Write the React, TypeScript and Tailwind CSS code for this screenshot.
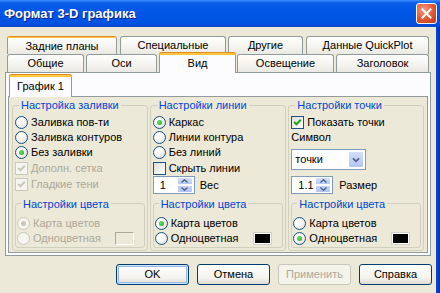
import React from "react";

const blue = "text-[#0046D5]";

function Radio({ checked, disabled }: { checked?: boolean; disabled?: boolean }) {
  return (
    <span
      className={`flex h-[13px] w-[13px] shrink-0 items-center justify-center rounded-full border ${
        disabled
          ? "border-[#CAC8BB] bg-[#F6F5EF]"
          : "border-[#1C5180] bg-[radial-gradient(circle_at_35%_35%,#ffffff_25%,#D5D4CC_100%)]"
      }`}
    >
      {checked && (
        <span
          className={`h-[5px] w-[5px] rounded-full ${
            disabled ? "bg-[#CAC8BB]" : "bg-[radial-gradient(circle_at_40%_40%,#6CE26C,#1E9A1E)]"
          }`}
        />
      )}
    </span>
  );
}

function Check({ checked, disabled }: { checked?: boolean; disabled?: boolean }) {
  return (
    <span
      className={`flex h-[13px] w-[13px] shrink-0 items-center justify-center border ${
        disabled
          ? "border-[#CAC8BB] bg-[#F6F5EF]"
          : "border-[#1C5180] bg-[linear-gradient(135deg,#DCDCD7,#ffffff)]"
      }`}
    >
      {checked && (
        <svg width="9" height="9" viewBox="0 0 9 9">
          <path
            d="M1.2 4 L3.5 6.3 L7.8 1.8"
            stroke={disabled ? "#CAC8BB" : "#21A121"}
            strokeWidth="2"
            fill="none"
          />
        </svg>
      )}
    </span>
  );
}

function Option({
  kind,
  label,
  checked,
  disabled,
  tall,
}: {
  kind: "radio" | "check";
  label: string;
  checked?: boolean;
  disabled?: boolean;
  tall?: boolean;
}) {
  return (
    <div className={`flex items-center gap-[3px] ${tall ? "h-[16px]" : "h-[15px]"}`}>
      {kind === "radio" ? <Radio checked={checked} disabled={disabled} /> : <Check checked={checked} disabled={disabled} />}
      <span className={disabled ? "text-[#ACA899]" : "text-black"}>{label}</span>
    </div>
  );
}

function GroupTitle({ children, small }: { children: React.ReactNode; small?: boolean }) {
  return (
    <div
      className={`${small ? "-mt-[7px]" : "-mt-[8px]"} ml-[4px] self-start bg-[#ECE9D8] px-[2px] leading-[14px] ${blue}`}
    >
      {children}
    </div>
  );
}

function Spin({ value }: { value: string }) {
  return (
    <div className="flex h-[18px] w-[42px] items-center border border-[#7F9DB9] bg-white pl-[6px]">
      <span className="flex-1">{value}</span>
      <div className="mr-[1px] flex h-[16px] w-[16px] flex-col">
        <div className="flex h-[8px] items-center justify-center rounded-t-[2px] border border-white bg-[linear-gradient(#D3DEFB,#B6C9F6)]">
          <svg width="7" height="4" viewBox="0 0 7 4">
            <path d="M0.5 3.5 L3.5 0.8 L6.5 3.5" stroke="#4D6185" strokeWidth="1.4" fill="none" />
          </svg>
        </div>
        <div className="flex h-[8px] items-center justify-center rounded-b-[2px] border border-white bg-[linear-gradient(#C6D5FA,#AFC4F5)]">
          <svg width="7" height="4" viewBox="0 0 7 4">
            <path d="M0.5 0.5 L3.5 3.2 L6.5 0.5" stroke="#4D6185" strokeWidth="1.4" fill="none" />
          </svg>
        </div>
      </div>
    </div>
  );
}

function Swatch({ disabled }: { disabled?: boolean }) {
  return disabled ? (
    <span className="ml-auto mr-[9px] h-[13px] w-[19px] border border-b-white border-l-[#ACA899] border-r-white border-t-[#ACA899] bg-[#ECE9D8]" />
  ) : (
    <span className="ml-auto mr-[9px] flex h-[13px] w-[19px] border border-[#D4D0C8] bg-white p-[1px]">
      <span className="flex-1 bg-black" />
    </span>
  );
}

function ColorBox({ mode, disabled }: { mode: "map" | "mono"; disabled?: boolean }) {
  return (
    <div className="mb-[2px] mt-auto flex h-[45px] flex-col rounded-[3px] border border-[#D0D0BF] px-[1px]">
      <GroupTitle small>Настройки цвета</GroupTitle>
      <div className="mt-[5px] flex h-[15px] items-center gap-[3px]">
        <Radio checked={mode === "map"} disabled={disabled} />
        <span className={disabled ? "text-[#ACA899]" : "text-black"}>Карта цветов</span>
      </div>
      <div className="flex h-[15px] items-center gap-[3px]">
        <Radio checked={mode === "mono"} disabled={disabled} />
        <span className={disabled ? "text-[#ACA899]" : "text-black"}>Одноцветная</span>
        <Swatch disabled={disabled} />
      </div>
    </div>
  );
}

function Tab({
  label,
  w,
  ml,
  hot,
  selected,
}: {
  label: string;
  w: string;
  ml: string;
  hot?: boolean;
  selected?: boolean;
}) {
  if (selected) {
    return (
      <div
        className={`relative z-10 -mt-[2px] flex h-[21px] flex-col rounded-t-[3px] border-x border-[#919B9C] bg-[#FCFCFE] ${w} ${ml}`}
      >
        <div className="-mx-[1px] h-[3px] rounded-t-[3px] border-t border-[#E68B2C] bg-[#FFC73C]" />
        <div className="flex flex-1 items-center justify-center pb-[2px]">{label}</div>
      </div>
    );
  }
  return (
    <div
      className={`flex h-[18px] flex-col rounded-t-[3px] border border-b-0 border-[#919B9C] bg-[linear-gradient(#FFFFFF,#F4F3EE_60%,#E9E8E1)] ${w} ${ml} ${
        hot ? "border-t-[#E68B2C]" : ""
      }`}
    >
      {hot && <div className="h-[1px] bg-[#FFC73C]" />}
      <div className="flex flex-1 items-center justify-center">{label}</div>
    </div>
  );
}

function Button({ label, def, disabled }: { label: string; def?: boolean; disabled?: boolean }) {
  return (
    <div
      className={`flex h-[21px] w-[73px] items-center justify-center rounded-[3px] border ${
        disabled
          ? "border-[#C9C7BA] bg-[#F5F4EA] text-[#ACA899]"
          : "border-[#003C74] bg-[linear-gradient(#FFFFFF,#F3F2EC_70%,#DEDBD0)] text-black"
      } ${def ? "shadow-[inset_0_0_0_1px_#CEE7FF,inset_0_0_0_2px_#98B8EA]" : ""}`}
    >
      {label}
    </div>
  );
}

export default function App() {
  return (
    <div className="flex h-[293px] w-[440px] flex-col overflow-hidden font-['Liberation_Sans',Arial,sans-serif] text-[11px] text-black">
      {/* title bar */}
      <div className="flex h-[27px] shrink-0 items-center justify-between bg-[linear-gradient(#3D8DF8_0px,#0A5DE9_3px,#0056E6_45%,#0053E0_85%,#0046CF_100%)] pl-[4px] pr-[3px]">
        <span className="text-[13px] font-bold text-white [text-shadow:1px_1px_#0A1E8C]">Формат 3-D графика</span>
        <div className="flex h-[21px] w-[21px] items-center justify-center rounded-[3px] border border-white bg-[radial-gradient(circle_at_35%_30%,#F39A7E,#DF5531_55%,#C23A16)]">
          <svg width="11" height="11" viewBox="0 0 11 11">
            <path d="M1.5 1.5 L9.5 9.5 M9.5 1.5 L1.5 9.5" stroke="white" strokeWidth="2" strokeLinecap="square" />
          </svg>
        </div>
      </div>

      <div className="flex flex-1">
        {/* dialog body */}
        <div className="flex w-[436px] flex-col bg-[#ECE9D8] px-[5px] pt-[9px]">
          <div className="flex pl-[2px]">
            <Tab label="Задние планы" w="w-[110px]" ml="ml-0" hot />
            <Tab label="Специальные" w="w-[106px]" ml="ml-[3px]" />
            <Tab label="Другие" w="w-[75px]" ml="ml-[2px]" />
            <Tab label="Данные QuickPlot" w="w-[123px]" ml="ml-[3px]" />
          </div>
          <div className="flex h-[18px] items-start pl-[2px]">
            <Tab label="Общие" w="w-[77px]" ml="ml-0" />
            <Tab label="Оси" w="w-[71px]" ml="ml-[2px]" />
            <Tab label="Вид" w="w-[77px]" ml="ml-[2px]" selected />
            <Tab label="Освещение" w="w-[97px]" ml="ml-[1px]" />
            <Tab label="Заголовок" w="w-[93px]" ml="ml-[2px]" />
          </div>

          {/* outer page */}
          <div className="flex w-[426px] flex-col border border-[#919B9C] bg-[#FCFCFE] px-[2px] pb-[2px] pt-[1px]">
            <div className="flex">
              <div className="relative z-10 ml-[1px] flex h-[23px] w-[63px] flex-col rounded-t-[3px] border-x border-[#919B9C] bg-[#FCFCFE]">
                <div className="-mx-[1px] h-[3px] rounded-t-[3px] border-t border-[#E68B2C] bg-[#FFC73C]" />
                <div className="flex flex-1 items-center justify-center pb-[2px]">График 1</div>
              </div>
              <div className="flex-1" />
            </div>

            {/* inner page */}
            <div className="-mt-[1px] flex h-[157px] gap-[2px] border border-[#919B9C] bg-[#ECE9D8] px-[3px] pt-[8px]">
              {/* fill */}
              <div className="flex h-[146px] w-[136px] flex-col rounded-[3px] border border-[#D0D0BF] px-[2px]">
                <GroupTitle>Настройка заливки</GroupTitle>
                <div className="mt-[3px]" />
                <Option kind="radio" label="Заливка пов-ти" />
                <Option kind="radio" label="Заливка контуров" />
                <Option kind="radio" label="Без заливки" checked />
                <Option kind="check" label="Дополн. сетка" checked disabled tall />
                <Option kind="check" label="Гладкие тени" checked disabled tall />
                <ColorBox mode="map" disabled />
              </div>

              {/* line */}
              <div className="flex h-[146px] w-[137px] flex-col rounded-[3px] border border-[#D0D0BF] px-[2px]">
                <GroupTitle>Настройки линии</GroupTitle>
                <div className="mt-[3px]" />
                <Option kind="radio" label="Каркас" checked />
                <Option kind="radio" label="Линии контура" />
                <Option kind="radio" label="Без линий" />
                <Option kind="check" label="Скрыть линии" tall />
                <div className="flex items-center gap-[5px]">
                  <Spin value="1" />
                  <span>Вес</span>
                </div>
                <ColorBox mode="map" />
              </div>

              {/* points */}
              <div className="flex h-[146px] w-[136px] flex-col rounded-[3px] border border-[#D0D0BF] px-[2px]">
                <GroupTitle>Настройки точки</GroupTitle>
                <div className="mt-[3px]" />
                <Option kind="check" label="Показать точки" checked />
                <div className="flex h-[15px] items-center">Символ</div>
                <div className="mt-[4px] flex h-[21px] w-[75px] items-center border border-[#7F9DB9] bg-white pl-[3px]">
                  <span className="flex-1">точки</span>
                  <div className="mr-[1px] flex h-[17px] w-[16px] items-center justify-center rounded-[2px] border border-white bg-[linear-gradient(#D3DEFB,#B1C6F6)]">
                    <svg width="8" height="6" viewBox="0 0 8 6">
                      <path d="M1 1.3 L4 4.3 L7 1.3" stroke="#4D6185" strokeWidth="1.8" fill="none" />
                    </svg>
                  </div>
                </div>
                <div className="mt-[6px] flex items-center gap-[6px]">
                  <Spin value="1.1" />
                  <span>Размер</span>
                </div>
                <ColorBox mode="mono" />
              </div>
            </div>
          </div>

          {/* buttons */}
          <div className="-mr-[1px] mt-[8px] flex justify-end gap-[8px]">
            <Button label="OK" def />
            <Button label="Отмена" />
            <Button label="Применить" disabled />
            <Button label="Справка" />
          </div>
        </div>
        {/* right frame */}
        <div className="w-[4px] bg-[linear-gradient(to_right,#0A46D8,#0831B8)]" />
      </div>
    </div>
  );
}
